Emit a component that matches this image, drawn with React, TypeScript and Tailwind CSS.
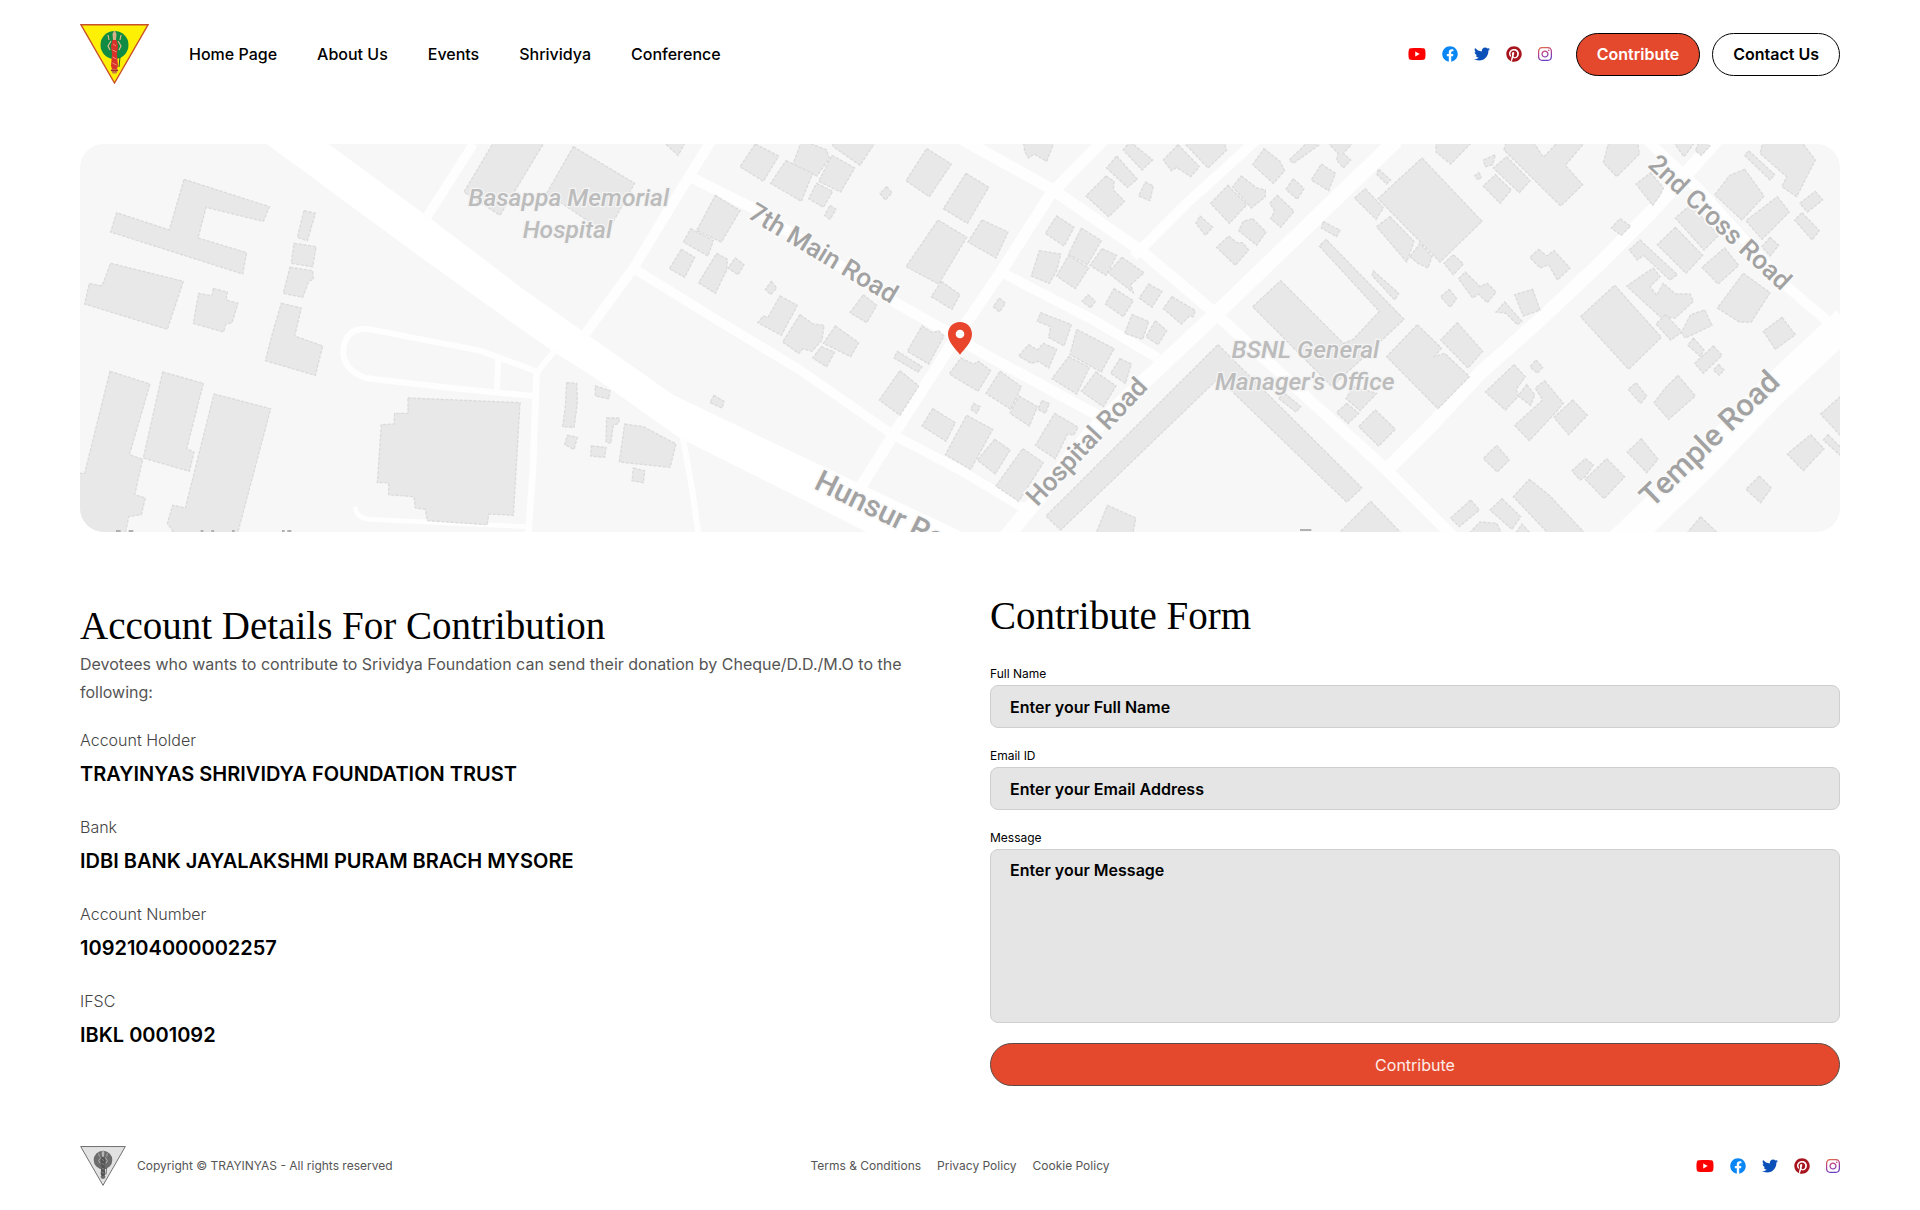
import React, { memo } from "react"
import { FaFacebook, FaInstagram, FaPinterest, FaTwitter, FaYoutube } from "react-icons/fa"

const NAV_LINKS = ["Home Page", "About Us", "Events", "Shrividya", "Conference"]

const POLICY_LINKS = ["Terms & Conditions", "Privacy Policy", "Cookie Policy"]

const ACCOUNT = [
  { label: "Account Holder", value: "TRAYINYAS SHRIVIDYA FOUNDATION TRUST" },
  { label: "Bank", value: "IDBI BANK JAYALAKSHMI PURAM BRACH MYSORE" },
  { label: "Account Number", value: "1092104000002257" },
  { label: "IFSC", value: "IBKL 0001092" }
]

// The map is drawn as four tiles side by side, each with its own origin
const TILES = [
  {
    x: 0,
    roads: [
      { d: "M1180 12L1035 240", w: 28 },
      { d: "M1430 625L1372 695L1200 632L870 568Q800 560 790 625Q785 690 860 715L1120 745L1362 768", w: 18 },
      { d: "M1256 645L1250 755", w: 18 },
      { d: "M1370 690L1358 1000L1345 1180", w: 20 },
      { d: "M825 1100Q830 1135 870 1138L1340 1160", w: 14 }
    ],
    buildings: [
      "312,118 568,200 550,244 378,202 354,294 500,338 488,402 92,276 110,218 268,270",
      "92,370 310,424 262,568 14,492 28,430 66,438",
      "400,446 442,456 438,480 474,490 456,548 438,552 430,576 340,550 356,460 396,468",
      "672,212 706,220 682,302 652,292",
      "642,310 708,320 698,380 634,370",
      "630,382 698,392 700,418 686,424 668,472 610,460",
      "604,490 664,504 644,588 728,618 706,706 556,662 578,578",
      "90,694 210,732 148,944 188,958 164,1064 196,1074 184,1124 146,1130 134,1190 -9,1190 -9,1000 14,1000",
      "248,696 370,730 320,926 342,936 328,994 190,954",
      "402,762 572,806 470,1190 290,1190 262,1150 278,1096 316,1104",
      "984,774 1320,788 1300,1126 1226,1122 1222,1154 1042,1142 1036,1108 1006,1104 1002,1070 926,1064 926,1028 892,1028 904,854 942,852 944,820 984,820",
      "1245,0 1397,0 1260,226 1152,156"
    ]
  },
  {
    x: 1320,
    roads: [
      { d: "M575 0L510 105L340 385L190 590", w: 30 },
      { d: "M510 110L700 205L1130 490L1290 580L1380 635L1740 830", w: 32 },
      { d: "M340 385L600 545L840 690L1120 885L1320 990L1520 1110", w: 28 },
      { d: "M1010 1060L1120 885L1290 620L1440 400L1590 165L1750 0", w: 34 },
      { d: "M488 890L515 1040L535 1180", w: 18 }
    ],
    buildings: [
      "160,20 344,130 260,280 80,160",
      "424,0 500,0 474,46",
      "706,12 776,48 730,124 660,80",
      "846,0 920,30 928,56 890,108 816,80",
      "798,62 878,100 844,184 752,130",
      "936,46 1004,84 962,156 896,124",
      "890,130 938,154 910,202 866,176",
      "936,0 1070,0 1020,76 940,20",
      "930,196 948,208 930,238 914,226",
      "1100,140 1116,158 1096,180 1080,160",
      "1220,26 1294,72 1228,170 1158,122",
      "1338,100 1406,142 1342,250 1270,206",
      "1254,240 1340,292 1256,432 1158,380",
      "1264,424 1320,464 1296,508 1234,470",
      "586,166 660,212 604,306 530,272",
      "512,266 580,302 564,348 490,306",
      "484,328 524,352 494,412 448,386",
      "590,340 622,358 620,390 586,460 536,428",
      "646,354 672,374 654,404 624,384",
      "754,424 770,444 752,464 736,448",
      "780,468 832,496 784,586 714,548 730,528 744,532",
      "840,524 880,552 912,556 906,600 876,634 850,626 836,640 788,606",
      "946,558 1016,608 992,650 910,610",
      "904,620 944,636 920,680 878,654",
      "1030,464 1070,496 1040,548 990,518",
      "1206,558 1238,578 1256,572 1272,588 1226,672 1162,634",
      "1132,634 1206,680 1194,696 1122,654",
      "1140,692 1196,738 1140,826 1078,780",
      "1322,654 1360,672 1376,664 1412,692 1374,754 1288,702",
      "1238,806 1306,848 1278,904 1206,858",
      "1360,790 1380,800 1370,820 1352,808",
      "1340,826 1418,868 1352,988 1276,944",
      "140,728 170,730 172,790 162,862 128,860 136,800",
      "226,738 270,752 266,776 226,768",
      "260,834 298,834 296,850 280,856 272,910 258,906",
      "142,886 172,892 162,928 134,914",
      "214,918 258,922 254,952 212,948",
      "314,852 370,860 468,912 450,982 298,966",
      "340,984 374,992 370,1028 336,1022",
      "582,766 612,784 606,804 570,788"
    ]
  },
  {
    x: 2640,
    roads: [
      { d: "M0 -5L280 150L540 330L760 515L1060 790L1280 990L1480 1190", w: 34 },
      { d: "M130 400L400 540L595 655", w: 30 },
      { d: "M520 350L680 190L890 0", w: 30 },
      { d: "M1310 0L1040 260L770 520L600 680L400 870L140 1190", w: 46 }
    ],
    buildings: [
      "190,0 285,0 260,64 222,42 206,54 194,34",
      "66,240 144,276 108,354 24,306",
      "470,48 532,118 502,142 440,84",
      "510,5 578,60 546,90 490,30",
      "438,108 462,124 460,150 494,184 446,230 378,168",
      "556,126 580,138 570,182 536,168",
      "654,14 718,80 692,110 650,82 634,92 610,60",
      "664,0 790,0 800,30 744,84",
      "912,26 960,64 974,92 940,130 878,74",
      "1050,0 1076,16 1000,70 988,60",
      "1084,72 1126,100 1106,152 1054,120",
      "1000,116 1032,146 1012,178 978,148",
      "1096,0 1186,0 1150,40 1172,60 1150,84 1130,60 1134,40",
      "804,136 860,194 808,250 752,190",
      "844,108 890,144 916,150 916,170 874,204 818,140",
      "952,166 1002,214 962,262 932,236 944,214 930,190",
      "720,228 758,262 736,286 708,250",
      "878,236 918,276 890,316 836,272 850,244",
      "806,288 830,308 848,308 866,330 826,376 770,322",
      "290,228 342,262 312,318 256,280",
      "364,264 424,302 382,374 326,342",
      "238,332 302,342 290,392 268,430 214,408",
      "326,346 386,384 346,446 290,408",
      "426,326 470,346 438,406 390,376",
      "486,352 552,398 512,434 520,458 444,398",
      "462,446 520,482 490,530 436,492",
      "566,432 606,454 576,502 538,474",
      "636,470 706,512 700,530 688,528 664,552 610,506",
      "516,524 566,544 548,598 494,580",
      "586,542 620,572 594,614 558,590",
      "384,464 406,484 392,504 366,484",
      "118,474 136,490 118,516 100,500",
      "242,518 334,554 312,618 266,592 272,560 232,544",
      "206,614 232,630 250,610 290,628 266,684 236,664 214,670 176,648",
      "350,568 462,626 424,696 330,644",
      "326,650 388,682 350,762 276,716",
      "408,696 468,738 430,800 364,754",
      "480,656 514,672 496,730 452,700",
      "120,694 184,740 152,808 78,760",
      "176,768 232,800 208,858 150,820",
      "246,782 268,790 256,820 234,808",
      "284,820 354,862 340,886 324,880 286,956 226,916",
      "104,898 150,930 106,1002 52,960",
      "188,926 250,968 176,1084 108,1038",
      "774,614 1206,1044 1160,1086 812,750 768,722 302,1170 258,1128",
      "442,1096 528,1134 516,1190 404,1190",
      "1232,1084 1334,1190 1126,1190",
      "878,500 962,422 1150,610 1180,598 1258,514 1078,318 1098,298 1332,538 1116,740",
      "974,760 1022,800 1008,816 955,775",
      "1180,740 1250,760 1200,812 1158,776",
      "1160,790 1196,820 1164,850 1130,818",
      "1246,810 1306,868 1256,918 1196,860",
      "1216,146 1270,204 1248,238 1184,174",
      "1290,230 1362,304 1340,366 1250,260",
      "1256,88 1292,120 1280,132 1250,102",
      "1240,392 1316,460 1304,480 1236,406",
      "1090,244 1114,258 1140,270 1130,290 1084,264"
    ]
  },
  {
    x: 3960,
    roads: [
      { d: "M-40 990L100 850L240 700L420 540L600 370L760 210L950 0", w: 42 },
      { d: "M740 0L900 150L1150 430L1290 550", w: 30 },
      { d: "M650 1220L900 980L1110 760L1340 545", w: 92 }
    ],
    buildings: [
      "66,54 246,244 120,366 -66,176",
      "52,554 124,624 104,650 134,640 208,710 114,806 -40,650",
      "172,548 248,634 204,684 122,600",
      "108,0 222,0 152,72 108,36",
      "250,60 286,44 278,74 256,80",
      "236,98 244,110 236,120 224,108",
      "320,0 396,0 430,52 480,0 560,0 496,76 548,134 482,198 312,30",
      "320,50 390,122 358,158 280,84",
      "286,104 334,150 300,190 250,138",
      "160,344 190,372 160,404 132,370",
      "30,350 60,310 96,350 84,384 54,370",
      "196,396 240,440 262,430 288,456 262,488 236,462 218,474 176,416",
      "148,448 170,476 150,502 122,470",
      "416,328 440,348 462,332 510,384 472,420 446,374 420,384 390,352",
      "398,448 420,510 370,528 344,464",
      "314,486 366,544 352,554 318,520 288,516",
      "660,236 692,258 664,286 634,264",
      "628,0 712,0 718,42 650,110 610,68",
      "752,98 790,144 780,166 758,196 708,132",
      "816,0 890,0 852,50",
      "900,0 930,18 904,46 886,32",
      "720,300 832,404 810,420 730,346 712,360 688,330",
      "826,262 908,346 858,400 772,314",
      "872,194 956,286 912,330 826,234",
      "974,324 1016,376 954,432 906,382",
      "1034,88 1092,168 1026,240 944,164 990,106",
      "1132,170 1168,216 1086,298 1038,242",
      "1046,32 1124,104 1110,120 1034,46",
      "1090,0 1200,0 1246,60 1220,110 1190,170 1146,140 1160,110 1080,40",
      "1246,154 1268,180 1222,216 1200,190",
      "1206,218 1258,272 1236,300 1184,240",
      "1110,292 1136,316 1110,348 1086,320",
      "1030,400 1110,458 1054,546 1018,546 952,504",
      "1146,532 1186,584 1126,628 1090,574",
      "644,436 784,592 686,688 542,530",
      "760,384 780,410 750,440 770,466 790,430 826,462 870,462 880,484 826,534 780,530 680,438",
      "796,524 846,576 812,600 768,552",
      "914,510 936,556 856,594 844,578 872,524",
      "880,594 912,630 902,650 864,616",
      "940,618 966,646 910,700 884,670",
      "956,674 972,690 958,706 940,690",
      "708,728 740,768 722,790 684,748",
      "834,706 886,768 806,838 762,788 796,744",
      "342,674 376,710 348,748 356,768 316,810 256,756",
      "408,660 428,682 412,700 390,680",
      "380,734 404,764 392,796 354,768",
      "434,722 490,790 468,816 388,902 344,856 428,780 406,744",
      "518,780 562,826 506,884 462,832",
      "290,916 328,960 292,996 250,956",
      "724,896 774,958 740,998 682,936",
      "556,956 580,974 556,1010 540,1020 516,992",
      "620,956 674,1010 612,1076 556,1018",
      "388,1018 450,1068 564,1190 454,1190 340,1070",
      "212,1080 238,1110 178,1160 152,1134",
      "306,1076 362,1130 336,1168 270,1110",
      "198,1190 240,1146 290,1150 310,1190",
      "340,1190 366,1152 400,1190",
      "1232,884 1272,926 1210,992 1162,942",
      "1284,884 1330,930 1330,954 1270,900",
      "1262,822 1330,762 1330,896",
      "1078,1008 1114,1044 1082,1088 1038,1048",
      "902,1130 964,1190 852,1190"
    ]
  }
]

const ROAD_LABELS = [
  { text: "7th Main Road", x: 2000, y: 220, angle: 31, size: 78 },
  { text: "Hunsur Road", x: 2198, y: 1032, angle: 26, size: 90 },
  { text: "Hospital Road", x: 2872, y: 1090, angle: -47, size: 78 },
  { text: "2nd Cross Road", x: 4700, y: 66, angle: 43, size: 78 },
  { text: "Temple Road", x: 4716, y: 1094, angle: -44, size: 92 }
]

const PLACE_LABELS = [
  { text: "Basappa Memorial", x: 1466, y: 186 },
  { text: "Hospital", x: 1462, y: 282 },
  { text: "BSNL General", x: 3676, y: 642 },
  { text: "Manager's Office", x: 3674, y: 738 }
]

const LocationMap = memo(() => {
  return (
    <svg
      className="block h-[388px] w-full rounded-3xl bg-[#f7f7f7]"
      viewBox="0 0 5280 1164"
      preserveAspectRatio="xMidYMid slice"
      role="img"
      aria-label="Map of the foundation's location"
    >
      {/* Hunsur Road */}
      <polygon
        fill="#fff"
        points="745,0 1050,223 1320,428 1510,563 1780,753 2020,868 2220,963 2680,1180 2390,1180 2190,1078 1800,883 1540,698 1420,623 1320,553 1020,338 560,0"
      />
      {TILES.map((tile) => (
        <g key={tile.x} transform={`translate(${tile.x} -12)`} fill="none" stroke="#fefefe" strokeLinejoin="round">
          {tile.roads.map((road) => (
            <path key={road.d} d={road.d} strokeWidth={road.w} />
          ))}
        </g>
      ))}
      {TILES.map((tile) => (
        <g
          key={tile.x}
          transform={`translate(${tile.x} -12)`}
          fill="#e8e8e8"
          stroke="#dbdbdb"
          strokeWidth="4"
          strokeDasharray="10 4"
        >
          {tile.buildings.map((points) => (
            <polygon key={points} points={points} />
          ))}
        </g>
      ))}
      <g fontFamily='Roboto, "Liberation Sans", sans-serif' fontWeight="500" fill="#a2a2a2">
        {ROAD_LABELS.map((label) => (
          <text
            key={label.text}
            transform={`translate(${label.x} ${label.y}) rotate(${label.angle})`}
            fontSize={label.size}
            stroke="#fafafa"
            strokeWidth="10"
            paintOrder="stroke"
          >
            {label.text}
          </text>
        ))}
      </g>
      <g
        fontFamily='Roboto, "Liberation Sans", sans-serif'
        fontStyle="italic"
        fontWeight="500"
        fontSize="74"
        fill="#bcbcbc"
        textAnchor="middle"
        stroke="#f4f4f4"
        strokeWidth="8"
        paintOrder="stroke"
      >
        {PLACE_LABELS.map((label) => (
          <text key={label.text} x={label.x} y={label.y}>
            {label.text}
          </text>
        ))}
      </g>
      {/* Tops of a label that runs off the lower edge */}
      <path stroke="#b0b0b0" strokeWidth="6" d="M108 1161h14M146 1161h14M362 1161h8M394 1161h8M456 1161h8M606 1161h8M622 1161h12M3660 1158h34" />
      {/* Pin */}
      <path
        fill="#e8452c"
        fillRule="evenodd"
        d="M2640 534C2619 534 2604 550 2604 571C2604 595 2628 617 2640 632C2652 617 2676 595 2676 571C2676 550 2661 534 2640 534ZM2640 557A13 13 0 1 0 2640 583A13 13 0 1 0 2640 557Z"
      />
    </svg>
  )
})

LocationMap.displayName = "LocationMap"

function Logo({ className }: { className: string }) {
  return (
    <svg className={className} viewBox="0 0 69 60" role="img" aria-label="Trayinyas">
      <polygon points="1,0.8 68,0.8 34.5,59" fill="#fdf005" stroke="#c8502a" strokeWidth="1.4" />
      <circle cx="34.5" cy="21" r="14" fill="#0f8b44" />
      <path d="M31 17L28 22L30 26M38 17L41 22L39 26M29 16L28 11M40 16L41 11" stroke="#e3b98f" strokeWidth="1.2" fill="none" />
      <path d="M32.5 16H36.5L38 22L37 30L38 42L36.5 46H32.5L31 42L32 30L31 22Z" fill="#d8322a" />
      <path d="M33 20L36 22M32.5 26L36.5 28M32.5 33L36.5 35M32.5 39L36.5 41" stroke="#f0a27c" strokeWidth="0.8" />
      <path d="M34.5 6L36.5 10L36 16H33L32.5 10Z" fill="#d9b08a" />
      <path d="M40 33L39 43" stroke="#274f2d" strokeWidth="1" />
      <path d="M31 45H38L36.5 49.5H32.5Z" fill="#c87846" />
      <path d="M31 46.5H38" stroke="#a22a22" strokeWidth="1.2" />
    </svg>
  )
}

function SocialLinks() {
  return (
    <div className="flex items-center gap-4">
      <a href="#" aria-label="YouTube">
        <FaYoutube className="h-4 w-[18px] text-[#ff0000]" />
      </a>
      <a href="#" aria-label="Facebook">
        <FaFacebook className="h-4 w-4 text-[#0a86f5]" />
      </a>
      <a href="#" aria-label="Twitter">
        <FaTwitter className="h-4 w-4 text-[#0b4fb8]" />
      </a>
      <a href="#" aria-label="Pinterest">
        <FaPinterest className="h-4 w-4 text-[#a8151f]" />
      </a>
      <a href="#" aria-label="Instagram">
        <FaInstagram className="h-4 w-[14px]" fill="url(#insta)" />
      </a>
    </div>
  )
}

const FIELD =
  "block w-full rounded-lg border border-[#cfcfcf] bg-[#e5e5e5] px-[19px] text-base font-semibold text-black placeholder:text-black placeholder:opacity-100"

export default function App() {
  return (
    <div className="bg-white px-5 font-[Inter,sans-serif] text-black lg:px-20">
      <svg className="absolute h-0 w-0" aria-hidden="true">
        <defs>
          <linearGradient id="insta" x1="0" y1="0" x2="0.3" y2="1">
            <stop offset="0" stopColor="#e8743c" />
            <stop offset="0.5" stopColor="#b43f8e" />
            <stop offset="1" stopColor="#6a3fc4" />
          </linearGradient>
        </defs>
      </svg>

      <header className="flex flex-wrap items-center justify-between gap-6 py-6">
        <div className="flex items-center gap-10">
          <Logo className="h-[60px] w-[69px]" />
          <nav className="flex flex-wrap gap-10 text-base font-medium">
            {NAV_LINKS.map((link) => (
              <a key={link} href="#">
                {link}
              </a>
            ))}
          </nav>
        </div>
        <div className="flex items-center gap-6">
          <SocialLinks />
          <div className="flex gap-3">
            <button className="h-[43px] rounded-full border border-black bg-[#e5492d] px-5 text-base font-semibold text-white">
              Contribute
            </button>
            <button className="h-[43px] rounded-full border border-black bg-white px-5 text-base font-semibold">
              Contact Us
            </button>
          </div>
        </div>
      </header>

      <main className="mt-9">
        <LocationMap />

        <div className="mt-[60px] grid gap-[60px] lg:grid-cols-2">
          <section className="pt-[10px]">
            <h2 className="font-['Liberation_Serif',serif] text-[39px] leading-[48px]">
              Account Details For Contribution
            </h2>
            <p className="text-base leading-7 text-[#555]">
              Devotees who wants to contribute to Srividya Foundation can send their donation by Cheque/D.D./M.O to
              the following:
            </p>
            <dl className="mt-5 flex flex-col gap-[25px]">
              {ACCOUNT.map((row) => (
                <div key={row.label} className="flex flex-col gap-[6px]">
                  <dt className="text-base leading-7 font-light text-[#444]">{row.label}</dt>
                  <dd className="text-xl leading-7 font-semibold">{row.value}</dd>
                </div>
              ))}
            </dl>
          </section>

          <form onSubmit={(e) => e.preventDefault()}>
            <h2 className="font-['Liberation_Serif',serif] text-[39px] leading-[48px]">Contribute Form</h2>
            <div className="mt-[26px] flex flex-col gap-5">
              <div className="flex flex-col gap-[3px]">
                <label htmlFor="name" className="text-xs">
                  Full Name
                </label>
                <input id="name" type="text" placeholder="Enter your Full Name" className={`${FIELD} h-[43px]`} />
              </div>
              <div className="flex flex-col gap-[3px]">
                <label htmlFor="email" className="text-xs">
                  Email ID
                </label>
                <input id="email" type="email" placeholder="Enter your Email Address" className={`${FIELD} h-[43px]`} />
              </div>
              <div className="flex flex-col gap-[3px]">
                <label htmlFor="message" className="text-xs">
                  Message
                </label>
                <textarea
                  id="message"
                  placeholder="Enter your Message"
                  className={`${FIELD} h-[174px] resize-none py-2`}
                />
              </div>
              <button
                type="submit"
                className="h-[43px] w-full rounded-full border border-[#5a4a46] bg-[#e5492d] text-base text-white/90"
              >
                Contribute
              </button>
            </div>
          </form>
        </div>
      </main>

      <footer className="mt-[60px] grid items-center gap-4 pb-6 text-xs text-[#555] md:grid-cols-3">
        <div className="flex items-center gap-[11px]">
          <Logo className="h-10 w-[46px] grayscale" />
          <p>Copyright © TRAYINYAS - All rights reserved</p>
        </div>
        <div className="flex justify-center gap-4">
          {POLICY_LINKS.map((link) => (
            <a key={link} href="#">
              {link}
            </a>
          ))}
        </div>
        <div className="flex md:justify-end">
          <SocialLinks />
        </div>
      </footer>
    </div>
  )
}
